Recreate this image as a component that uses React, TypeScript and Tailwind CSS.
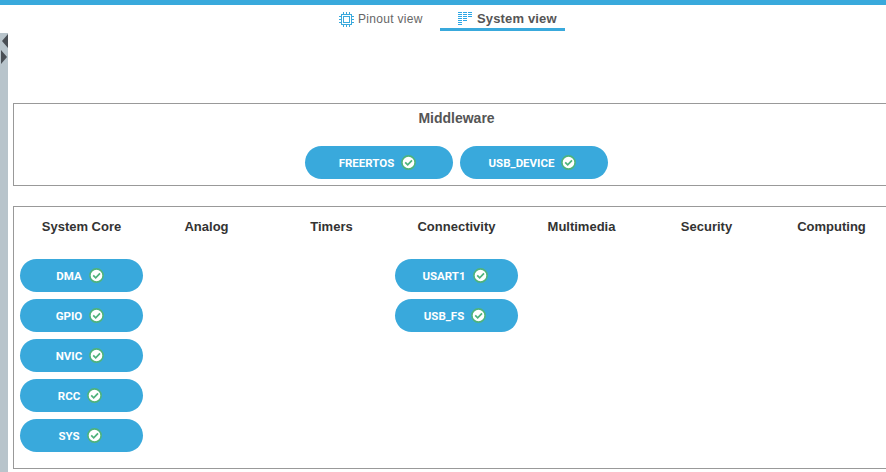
const font = { fontFamily: '"Liberation Sans", Arial, sans-serif' };
const pillFont = { fontFamily: 'Roboto, "Liberation Sans", sans-serif' };

const Check = () => (
  <svg width="15" height="15" viewBox="0 0 15 15" className="shrink-0">
    <circle cx="7.5" cy="7.5" r="6.6" fill="#ffffff" stroke="#4fb37c" strokeWidth="1.6" />
    <path d="M4.2 7.4 L6.7 9.9 L11 5.4" fill="none" stroke="#4fb37c" strokeWidth="1.7" />
  </svg>
);

const ChipIcon = () => (
  <svg width="15" height="15" viewBox="0 0 15 15" fill="none" stroke="#39a9dc" strokeWidth="1">
    <rect x="2.5" y="2.5" width="10" height="10" />
    <rect x="4.5" y="4.5" width="6" height="6" />
    <path d="M4.5 0v2M7.5 0v2M10.5 0v2M4.5 13v2M7.5 13v2M10.5 13v2M0 4.5h2M0 7.5h2M0 10.5h2M13 4.5h2M13 7.5h2M13 10.5h2" />
  </svg>
);

const SystemIcon = () => (
  <svg width="14" height="14" viewBox="0 0 14 14" fill="none" stroke="#2ba6e6" strokeWidth="1" shapeRendering="crispEdges">
    <path d="M0 0.5h4M5 0.5h4M10 0.5h4M0 2.5h4M5 2.5h4M10 2.5h4M0 4.5h4M5 4.5h4M10 4.5h4M0 6.5h4M5 6.5h4M0 8.5h4M5 8.5h4M0 10.5h4M0 12.5h4" />
  </svg>
);

const Pill = ({ label, w = "w-[123px]" }: { label: string; w?: string }) => (
  <div
    className={`${w} h-[33px] rounded-full bg-[#39a9dc] flex items-center justify-center gap-[7px] pr-[3px] text-white text-[11.5px] font-bold`}
    style={pillFont}
  >
    <span className="pt-[2px]">{label}</span>
    <Check />
  </div>
);

const columns = [
  { title: "System Core", items: ["DMA", "GPIO", "NVIC", "RCC", "SYS"] },
  { title: "Analog", items: [] },
  { title: "Timers", items: [] },
  { title: "Connectivity", items: ["USART1", "USB_FS"] },
  { title: "Multimedia", items: [] },
  { title: "Security", items: [] },
  { title: "Computing", items: [] },
];

export default function App() {
  return (
    <div className="w-[886px] h-[472px] overflow-hidden bg-white flex flex-col" style={font}>
      <div className="h-[5px] bg-[#39a9dc] shrink-0" />

      <div className="h-[26px] flex shrink-0 text-[12px]">
        <div className="ml-[339px] w-[101px] flex items-center gap-1 pt-[2px] text-[#666666]">
          <ChipIcon />
          <span className="tracking-[0.3px]">Pinout view</span>
        </div>
        <div className="w-[125px] h-[26px] border-b-[3px] border-[#39a9dc] flex items-center pl-[18px] pt-[4px] gap-[5px] text-[#555555] font-bold text-[13px] tracking-[0.15px]">
          <SystemIcon />
          <span>System view</span>
        </div>
      </div>

      <div className="flex flex-1 min-h-0">
        <div className="w-[8px] mt-[2px] bg-[#b8c4cb] shrink-0 flex flex-col items-start pt-[1px]">
          <div className="w-0 h-0 ml-[2px] border-y-[7px] border-y-transparent border-r-[6px] border-r-[#4a4f55]" />
          <div className="w-0 h-0 ml-px mt-[2px] border-y-[7px] border-y-transparent border-l-[6px] border-l-[#4a4f55]" />
        </div>

        <div className="flex-1 min-w-0 pl-[5px] pt-[72px]">
          <div className="w-[900px] h-[83px] border border-[#999999] flex flex-col">
            <div className="w-[885px] text-center pt-[7px] text-[14px] font-bold text-[#555555] leading-[15px]">
              Middleware
            </div>
            <div className="flex gap-[7px] ml-[291px] mt-[20px]">
              <Pill label="FREERTOS" w="w-[148px]" />
              <Pill label="USB_DEVICE" w="w-[148px]" />
            </div>
          </div>

          <div className="w-[900px] h-[263px] mt-[20px] border border-[#999999] flex pl-[5px] pt-[12px]">
            {columns.map((col) => (
              <div key={col.title} className="w-[125px] shrink-0 flex flex-col items-center">
                <div className="text-[13px] font-bold text-[#333333] leading-[15px] mb-[25px]">{col.title}</div>
                <div className="flex flex-col gap-[7px]">
                  {col.items.map((item) => (
                    <Pill key={item} label={item} />
                  ))}
                </div>
              </div>
            ))}
          </div>
        </div>
      </div>
    </div>
  );
}
